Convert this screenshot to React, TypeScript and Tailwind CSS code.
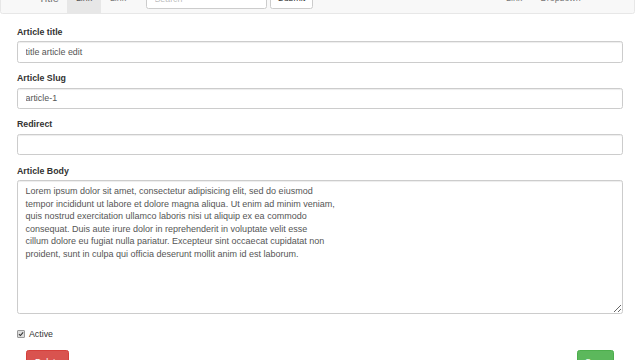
import React from "react";

const body = `Lorem ipsum dolor sit amet, consectetur adipisicing elit, sed do eiusmod
tempor incididunt ut labore et dolore magna aliqua. Ut enim ad minim veniam,
quis nostrud exercitation ullamco laboris nisi ut aliquip ex ea commodo
consequat. Duis aute irure dolor in reprehenderit in voluptate velit esse
cillum dolore eu fugiat nulla pariatur. Excepteur sint occaecat cupidatat non
proident, sunt in culpa qui officia deserunt mollit anim id est laborum.`;

function Field({ label, value }: { label: string; value: string }) {
  return (
    <div className="mb-[9.4px]">
      <label className="block text-[8.8px] font-bold leading-[12.5px] mb-[3.1px] text-[#333]">{label}</label>
      <input
        defaultValue={value}
        className="block w-full h-[21.3px] px-[7.5px] text-[8.9px] text-[#555] bg-white border border-[#ccc] rounded-[2.5px] shadow-[inset_0_1px_1px_rgba(0,0,0,0.075)] outline-none"
      />
    </div>
  );
}

export default function App() {
  return (
    <div className="w-[640px] h-[360px] overflow-hidden bg-white font-['Liberation_Sans',Arial,sans-serif] text-[#333]">
      {/* Navbar, scrolled mostly out of view */}
      <nav className="-mt-[17px] mb-[11.5px] w-[635px] h-[31.4px] flex items-stretch bg-[#f8f8f8] border border-[#e7e7e7] rounded-[2.5px] pl-[28px] pr-[35px] text-[#777]">
        <div className="w-[38px] flex items-center pl-[9.4px] text-[11px]">Title</div>
        <div className="w-[34px] flex items-center justify-center bg-[#e7e7e7] text-[#555] text-[8.8px]">Link</div>
        <div className="w-[34px] flex items-center justify-center text-[8.8px]">Link</div>
        <div className="flex items-center pl-[11px] gap-[3px]">
          <input
            placeholder="Search"
            className="w-[121px] h-[21.3px] px-[7.5px] text-[8.8px] bg-white border border-[#ccc] rounded-[2.5px] outline-none"
          />
          <button className="w-[43px] h-[21.3px] text-[8.8px] text-[#333] bg-white border border-[#ccc] rounded-[2.5px]">Submit</button>
        </div>
        <div className="ml-auto flex items-stretch">
          <div className="w-[34px] flex items-center justify-center text-[8.8px]">Link</div>
          <div className="flex items-center px-[9.4px] gap-[3px] text-[8.8px]">
            Dropdown
            <span className="w-0 h-0 border-x-[3px] border-x-transparent border-t-[3px] border-t-[#777]" />
          </div>
        </div>
      </nav>

      <form className="px-[17px]">
        <Field label="Article title" value="title article edit" />
        <Field label="Article Slug" value="article-1" />
        <Field label="Redirect" value="" />
        <div className="mb-[13.7px]">
          <label className="block text-[8.8px] font-bold leading-[12.5px] mb-[3.1px] text-[#333]">Article Body</label>
          <textarea
            defaultValue={body}
            className="block w-full h-[134px] px-[7.5px] py-[3.8px] text-[9px] leading-[12.5px] text-[#555] bg-white border border-[#ccc] rounded-[2.5px] shadow-[inset_0_1px_1px_rgba(0,0,0,0.075)] outline-none resize-y whitespace-pre overflow-hidden"
          />
        </div>
        <div className="flex items-center h-[12.5px] mb-[9.3px] text-[8.8px]">
          <span className="w-[8px] h-[8px] mr-[4px] flex items-center justify-center bg-[#ddd] border border-[#999] rounded-[1px]">
            <svg viewBox="0 0 10 10" className="w-[6px] h-[6px]">
              <path d="M1.5 5.2 L4 7.6 L8.6 2.2" fill="none" stroke="#333" strokeWidth="1.8" />
            </svg>
          </span>
          Active
        </div>
        <div className="flex justify-between px-[9.4px]">
          <button type="button" className="h-[21.3px] px-[7.5px] pt-[3.8px] text-[8.8px] leading-[12.5px] text-white bg-[#d9534f] border border-[#d43f3a] rounded-[2.5px] self-start">Delete</button>
          <button type="button" className="h-[21.3px] px-[7.5px] pt-[3.8px] text-[8.8px] leading-[12.5px] text-white bg-[#5cb85c] border border-[#4cae4c] rounded-[2.5px] self-start">Save</button>
        </div>
      </form>
    </div>
  );
}
